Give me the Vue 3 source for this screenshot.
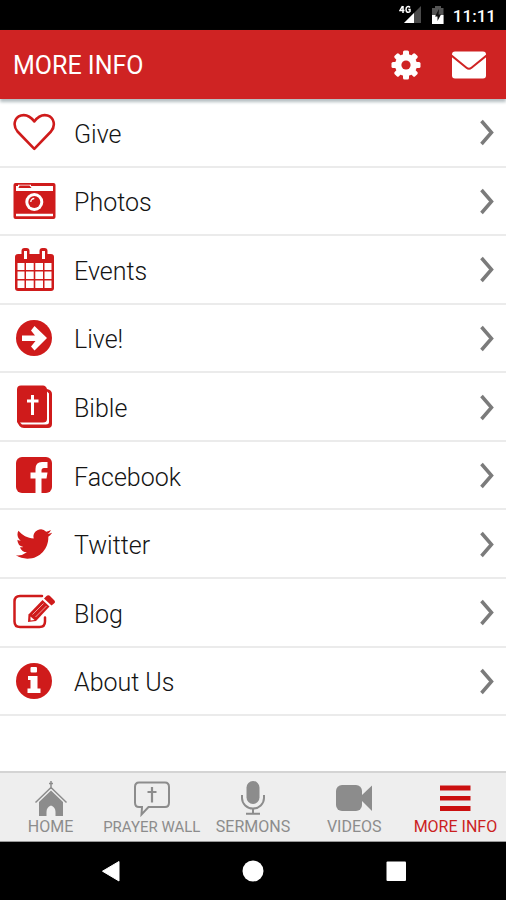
<script setup>
const rows = [
  { id: 'give', label: 'Give' },
  { id: 'photos', label: 'Photos' },
  { id: 'events', label: 'Events' },
  { id: 'live', label: 'Live!' },
  { id: 'bible', label: 'Bible' },
  { id: 'facebook', label: 'Facebook' },
  { id: 'twitter', label: 'Twitter' },
  { id: 'blog', label: 'Blog' },
  { id: 'about', label: 'About Us' },
]

const tabs = [
  { id: 'home', label: 'HOME' },
  { id: 'prayer', label: 'PRAYER WALL', compact: true },
  { id: 'sermons', label: 'SERMONS' },
  { id: 'videos', label: 'VIDEOS' },
  { id: 'more', label: 'MORE INFO', active: true },
]
</script>

<template>
  <div class="app">
    <div class="status">
      <svg class="status-signal" viewBox="0 0 24 20" aria-hidden="true">
        <path d="M22 1V18H5Z" fill="#4a4a4a" />
        <path d="M15 8V18H5Z" fill="#fff" />
        <path d="M3.500 1L1 5.500H5.500M4 1V8M11 2.500C9.500 .5 7 1.500 7 4.500S9.500 8 11 6.500V4.500H9.300" fill="none" stroke="#fff" stroke-width="1.500" />
      </svg>
      <svg class="status-battery" viewBox="0 0 14 20" aria-hidden="true">
        <path d="M4 1H10V3H12.500V19H1V3H4Z" fill="#555" />
        <path d="M1 10H12.500V19H1Z" fill="#fff" />
        <path d="M8 4L4 11.500H6.500V16L10 9.500H7.500Z" fill="#111" />
      </svg>
      <span class="clock">11:11</span>
    </div>

    <header class="header">
      <h1 class="title">MORE INFO</h1>
      <div class="actions">
        <button class="action" type="button" aria-label="Settings">
          <svg class="action-icon" viewBox="0 0 36 36" aria-hidden="true">
            <g fill="#fff">
              <circle cx="18" cy="18" r="11" />
              <rect v-for="n in 8" :key="n" x="15" y="3.500" width="6" height="8" rx="1.500" :transform="`rotate(${n * 45} 18 18)`" />
            </g>
            <circle cx="18" cy="18" r="4.600" fill="#cf2323" />
          </svg>
        </button>
        <button class="action" type="button" aria-label="Messages">
          <svg class="action-icon" viewBox="0 0 36 36" aria-hidden="true">
            <rect x="1" y="4.500" width="34" height="27" rx="3" fill="#fff" />
            <path d="M.5 8.500L15.500 20.800Q18 22.800 20.500 20.800L35.500 8.500" fill="none" stroke="#cf2323" stroke-width="2" />
          </svg>
        </button>
      </div>
    </header>

    <main class="list">
      <a v-for="row in rows" :key="row.id" class="row" :href="`#${row.id}`">
        <svg class="row-icon" viewBox="0 0 44 44" aria-hidden="true">
          <path v-if="row.id === 'give'" d="M22.300 38.800L5.500 21.500C.5 15.500 2.300 7.500 9 5.500C15 4 18.500 6.500 22.300 11.500C26 6.500 29.500 4 35.500 5.500C42 7.500 44 15.500 39 21.500Z" fill="none" stroke="#cf1b1b" stroke-width="2.600" stroke-linejoin="round" />
          <template v-else-if="row.id === 'photos'">
            <rect x="1.500" y="4" width="42" height="36" rx="2" fill="#cf1b1b" />
            <path d="M4 7H6V5.800H19V7H41V12H4ZM4 34.800H41V37.200H4Z" fill="#fff" />
            <path d="M7.500 6.500H17.500L19.500 9H6.500Z" fill="#cf1b1b" />
            <circle cx="22.300" cy="23" r="9" fill="#fff" />
            <circle cx="22.300" cy="23" r="6" fill="#cf1b1b" />
            <path d="M18.800 23A3.500 3.500 0 0 1 22.300 19.500" fill="none" stroke="#fff" stroke-width="1.300" />
          </template>
          <template v-else-if="row.id === 'events'">
            <rect x="3" y="7" width="39" height="37" rx="3" fill="#cf1b1b" />
            <rect x="9.500" y="1" width="8" height="13" rx="3" fill="#cf1b1b" />
            <rect x="27.500" y="1" width="8" height="13" rx="3" fill="#cf1b1b" />
            <path d="M12 4H15V12H12ZM30 4H33V12H30Z" fill="#fff" />
            <path d="M5.500 16H12.500V23H5.500ZM14 16H21.700V23H14ZM23.300 16H31V23H23.300ZM32.500 16H39.500V23H32.500ZM5.500 24.500H12.500V32H5.500ZM14 24.500H21.700V32H14ZM23.300 24.500H31V32H23.300ZM32.500 24.500H39.500V32H32.500ZM5.500 33.500H12.500V41H5.500ZM14 33.500H21.700V41H14ZM23.300 33.500H31V41H23.300ZM32.500 33.500H39.500V41H32.500Z" fill="#fff" />
          </template>
          <template v-else-if="row.id === 'live'">
            <circle cx="22" cy="22" r="18" fill="#cf1b1b" />
            <path d="M10 19.500H23L19 14.500L22.500 10L35 22L22.500 34.500L19 30.500L23.500 25H10Z" fill="#fff" />
          </template>
          <template v-else-if="row.id === 'bible'">
            <path d="M9 .5H31Q34 .5 35 4Q40 5 40 9V39Q40 43 36 43H12Q9 43 7.500 41L5 37V4.500Q5 .5 9 .5Z" fill="#cf1b1b" />
            <path d="M35 6.500L37 8.500V37Q37 39.500 34 39.500H10L8 37.500H31Q35 37.500 35 34Z" fill="#fff" />
            <path d="M19 10H22V14.500H26.500V17.500H22V30H19V17.500H15V14.500H19Z" fill="#fff" />
          </template>
          <template v-else-if="row.id === 'facebook'">
            <rect x="4" y="4" width="36" height="36" rx="6" fill="#cf1b1b" />
            <path d="M23.500 40V25.500H18.500V19.500H23.500V16Q23.500 9 30 9H35.500V15H32Q29.500 15 29.500 17.500V19.500H35.500L34.500 25.500H29.500V40Z" fill="#fff" />
          </template>
          <path v-else-if="row.id === 'twitter'" transform="translate(4 4) scale(1.500)" d="M23.953 4.570a10 10 0 0 1-2.825.775 4.958 4.958 0 0 0 2.163-2.723c-.951.555-2.005.959-3.127 1.184a4.920 4.920 0 0 0-8.384 4.482C7.690 8.095 4.067 6.130 1.640 3.162a4.822 4.822 0 0 0-.666 2.475c0 1.710.870 3.213 2.188 4.096a4.904 4.904 0 0 1-2.228-.616v.060a4.923 4.923 0 0 0 3.946 4.827 4.996 4.996 0 0 1-2.212.085 4.936 4.936 0 0 0 4.604 3.417 9.867 9.867 0 0 1-6.102 2.105c-.390 0-.779-.023-1.170-.067a13.995 13.995 0 0 0 7.557 2.209c9.053 0 13.998-7.496 13.998-13.985 0-.210 0-.420-.015-.630A9.935 9.935 0 0 0 24 4.590z" fill="#cf1b1b" />
          <template v-else-if="row.id === 'blog'">
            <path d="M30 6H8Q2.500 6 2.500 11.500V31.500Q2.500 37 8 37H27.500Q33 37 33 31.500V27.500" fill="none" stroke="#cf1b1b" stroke-width="2.500" stroke-linecap="round" />
            <path d="M16.500 24.500L30.500 10L37.500 16.500L24 31L16 32Z" fill="#cf1b1b" />
            <path d="M32 8.500L34.500 6Q36.500 4.500 38.500 6.500L42 10Q44 12 42 13.500L39.500 15.500Z" fill="#cf1b1b" />
            <path d="M20.500 24.500L31.500 13.500M23.500 27L34.500 16" fill="none" stroke="#fff" stroke-width=".6" />
            <path d="M18.500 26.500L22.500 30L18.500 30.500Z" fill="#fff" />
          </template>
          <template v-else>
            <circle cx="22" cy="22" r="18" fill="#cf1b1b" />
            <rect x="18.500" y="8" width="6.500" height="5.500" rx="1" fill="#fff" />
            <path d="M16 17H25.500V29.500H28.500V34H15.500V29.500H18.500V21H16Z" fill="#fff" />
          </template>
        </svg>
        <span class="row-label">{{ row.label }}</span>
        <svg class="chevron" viewBox="0 0 16 28" aria-hidden="true">
          <path d="M2.500 3L12.500 14.500L2.500 26" fill="none" stroke="#7b7b7b" stroke-width="3.500" />
        </svg>
      </a>
    </main>

    <nav class="tabs">
      <a v-for="tab in tabs" :key="tab.id" class="tab" :class="{ active: tab.active, compact: tab.compact }" :href="`#${tab.id}`">
        <svg class="tab-icon" viewBox="0 0 40 36" aria-hidden="true">
          <template v-if="tab.id === 'home'">
            <path d="M20 0V8M18 2.500H22M4.500 21.500L20 6.500L35.500 21.500" fill="none" stroke="#8c8c8c" stroke-width="1.500" />
            <path d="M20 9.500L32 21V35H24.500V31Q24.500 26 20 24.500Q15.500 26 15.500 31V35H8V21Z" fill="#8c8c8c" />
          </template>
          <template v-else-if="tab.id === 'prayer'">
            <path d="M7 1.500H33Q37 1.500 37 6V21.500Q37 26 33 26H16.500L9.500 33.500L10 26H7Q3 26 3 21.500V6Q3 1.500 7 1.500Z" fill="none" stroke="#8c8c8c" stroke-width="2" />
            <path d="M20 6V21.500M15.500 11H24.500" fill="none" stroke="#8c8c8c" stroke-width="2.200" />
          </template>
          <template v-else-if="tab.id === 'sermons'">
            <rect x="13.500" y="0" width="13" height="23" rx="6.500" fill="#8c8c8c" />
            <path d="M9 14V17A11 10.500 0 0 0 31 17V14M20 27.500V32.500M13 32.800H27" fill="none" stroke="#8c8c8c" stroke-width="2" />
          </template>
          <template v-else-if="tab.id === 'videos'">
            <rect x="2" y="4" width="26" height="26" rx="6" fill="#8c8c8c" />
            <path d="M28 14L38 4.500V30L28 20Z" fill="#8c8c8c" />
          </template>
          <path v-else d="M5 4.500H35.500V9.500H5ZM5 15H35.500V19.500H5ZM5 25H35.500V30H5Z" fill="#cb1010" />
        </svg>
        <span class="tab-label">{{ tab.label }}</span>
      </a>
    </nav>

    <div class="system">
      <button class="system-button" type="button" aria-label="Back">
        <svg class="system-icon" viewBox="0 0 24 24" aria-hidden="true"><path d="M21 2.500V22L4.500 12.200Z" fill="#fff" stroke="#fff" stroke-linejoin="round" /></svg>
      </button>
      <button class="system-button" type="button" aria-label="Home">
        <svg class="system-icon" viewBox="0 0 24 24" aria-hidden="true"><circle cx="12" cy="12" r="10.500" fill="#fff" /></svg>
      </button>
      <button class="system-button" type="button" aria-label="Recent apps">
        <svg class="system-icon" viewBox="0 0 24 24" aria-hidden="true"><rect x="2.500" y="2.500" width="19.500" height="19.500" rx="1" fill="#fff" /></svg>
      </button>
    </div>
  </div>
</template>

<style>
body {
  background: #fff;
}
</style>

<style scoped>
.app {
  display: flex;
  flex-direction: column;
  min-height: 100vh;
  font-family: Roboto, "Liberation Sans", sans-serif;
  color: #141414;
}

.status {
  display: flex;
  align-items: center;
  justify-content: flex-end;
  height: 30px;
  padding-right: 10px;
  background: #000;
  color: #fff;
}

.status-signal {
  width: 24px;
  height: 20px;
  margin-right: 8px;
}

.status-battery {
  width: 14px;
  height: 20px;
  margin-right: 8px;
}

.clock {
  padding-top: 2px;
  font-size: 17px;
  font-weight: 500;
  line-height: 28px;
}

.header {
  display: flex;
  align-items: center;
  justify-content: space-between;
  height: 69px;
  padding: 0 19px 0 13px;
  background: #cf2323;
  box-shadow: 0 3px 3px #b4bec1;
  z-index: 1;
}

.title {
  margin: 0;
  padding-top: 2px;
  font-size: 25px;
  font-weight: 400;
  line-height: 32px;
  color: #fff;
}

.actions {
  display: flex;
  gap: 27px;
}

.action,
.system-button {
  display: flex;
  padding: 0;
  border: 0;
  background: none;
}

.action-icon {
  width: 36px;
  height: 36px;
}

.list {
  display: flex;
  flex: 1;
  flex-direction: column;
  padding-bottom: 55px;
}

.row {
  display: flex;
  flex: 1;
  align-items: center;
  min-height: 60px;
  box-sizing: border-box;
  padding: 0 11px 0 12px;
  border-bottom: 2px solid #ebebeb;
  color: inherit;
  text-decoration: none;
}

.row-icon {
  width: 44px;
  height: 44px;
}

.row-label {
  flex: 1;
  margin-left: 18px;
  padding-top: 5px;
  font-size: 25px;
  font-weight: 300;
  line-height: 32px;
}

.chevron {
  width: 16px;
  height: 28px;
}

.tabs {
  display: grid;
  grid-template-columns: repeat(5, minmax(0, 1fr));
  height: 71px;
  box-sizing: border-box;
  border-top: 2px solid #d4d4d4;
  border-bottom: 1px solid #999;
  background: #eee;
}

.tab {
  display: flex;
  flex-direction: column;
  align-items: center;
  padding-top: 8px;
  color: #8c8c8c;
  text-decoration: none;
}

.tab-icon {
  width: 40px;
  height: 36px;
}

.tab-label {
  font-size: 16px;
  line-height: 20px;
  white-space: nowrap;
}

.tab.compact .tab-label {
  font-size: 15px;
}

.tab.active {
  color: #cb1f1f;
}

.system {
  display: flex;
  align-items: center;
  justify-content: center;
  gap: 119px;
  height: 58px;
  background: #000;
}

.system-icon {
  width: 24px;
  height: 24px;
}
</style>
